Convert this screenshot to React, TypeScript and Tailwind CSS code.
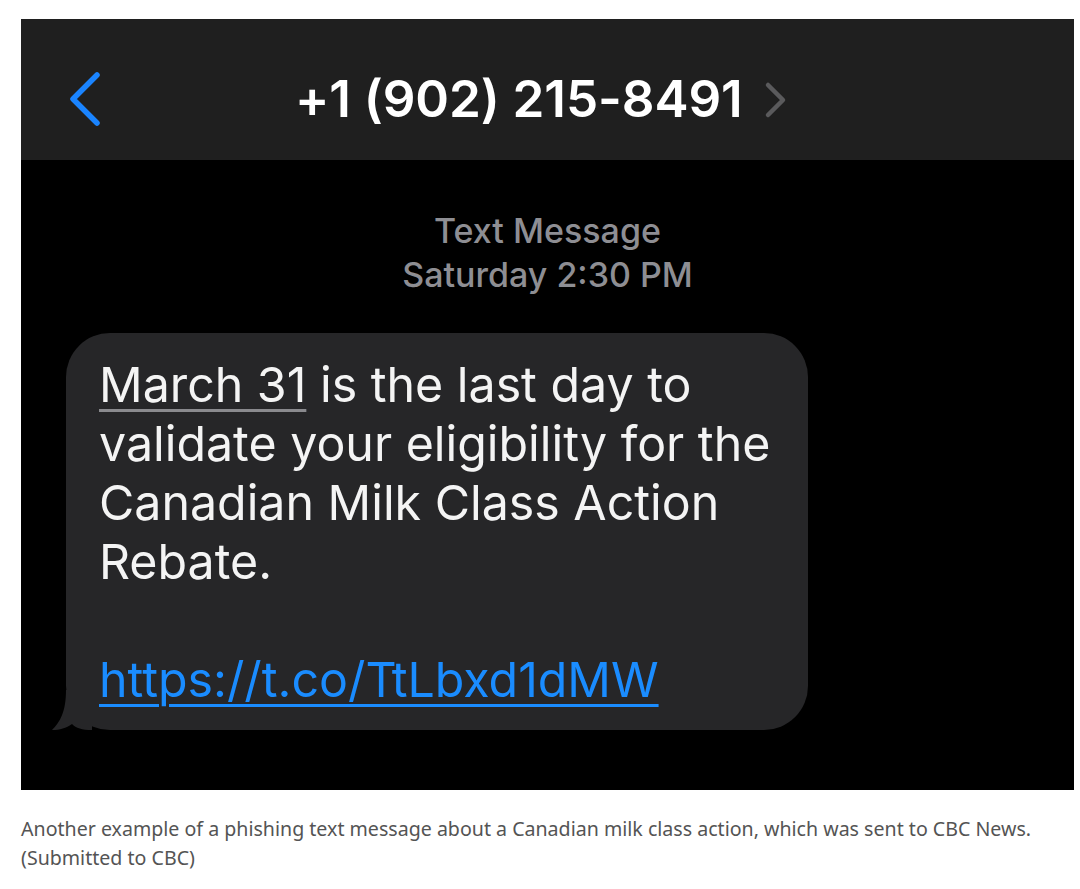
export default function App() {
  return (
    <div className="min-h-screen bg-white pt-[19px] pl-[21px]">
      {/* ── SCREENSHOT ── */}
      <div className="w-[1053px] bg-black font-['Inter',sans-serif]">
        {/* Header */}
        <div className="flex h-[141px] items-center bg-[#1f1f1f] pt-[18px]">
          <svg
            width="34"
            height="56"
            viewBox="0 0 34 56"
            fill="none"
            stroke="#1a84ff"
            strokeWidth="5.5"
            strokeLinecap="round"
            strokeLinejoin="round"
            className="ml-[46px]"
          >
            <path d="M30 4 L6 28 L30 52" />
          </svg>
          <div className="ml-[194px] text-[51.2px] font-semibold leading-none tracking-[-0.1px] text-white">
            +1 (902) 215-8491
          </div>
          <svg
            width="24"
            height="38"
            viewBox="0 0 24 38"
            fill="none"
            stroke="#5a5a5c"
            strokeWidth="4.5"
            strokeLinecap="round"
            strokeLinejoin="round"
            className="ml-[21px] mt-[2px]"
          >
            <path d="M4 4 L19 19 L4 34" />
          </svg>
        </div>

        {/* Conversation */}
        <div className="h-[630px] pt-[49px]">
          <div className="flex flex-col items-center text-[34px] font-medium leading-[44px] text-[#8e8e93]">
            <div>Text Message</div>
            <div>Saturday 2:30 PM</div>
          </div>

          <div className="relative ml-[45px] mt-[36px] w-[742px] rounded-[44px] bg-[#262628] pl-[33px] pr-[20px] pt-[22px] pb-[21px] text-[48.3px] leading-[59px] text-[#f4f4f4]">
            <svg
              width="40"
              height="40"
              viewBox="0 0 40 40"
              className="absolute bottom-0 left-[-14px]"
            >
              <path d="M14 0 L40 0 L40 40 C30 40 24 38 20 34 C14 38 8 40 0 40 C8 32 14 22 14 0 Z" fill="#262628" />
            </svg>
            <p className="relative">
              <span className="underline decoration-[#8a8a8e] decoration-[3px] underline-offset-[7px]">
                March 31
              </span>{" "}
              is the last day to validate your eligibility for the Canadian Milk Class Action Rebate.
            </p>
            <p className="relative mt-[59px]">
              <span className="text-[#1a8cff] underline decoration-[3px] underline-offset-[7px]">
                https://t.co/TtLbxd1dMW
              </span>
            </p>
          </div>
        </div>
      </div>

      {/* ── CAPTION ── */}
      <p className="mt-[24px] w-[1050px] font-['Noto_Sans',sans-serif] text-[19.6px] leading-[29px] text-[#545454]">
        Another example of a phishing text message about a Canadian milk class action, which was sent to CBC News.
        <br />
        (Submitted to CBC)
      </p>
    </div>
  );
}
